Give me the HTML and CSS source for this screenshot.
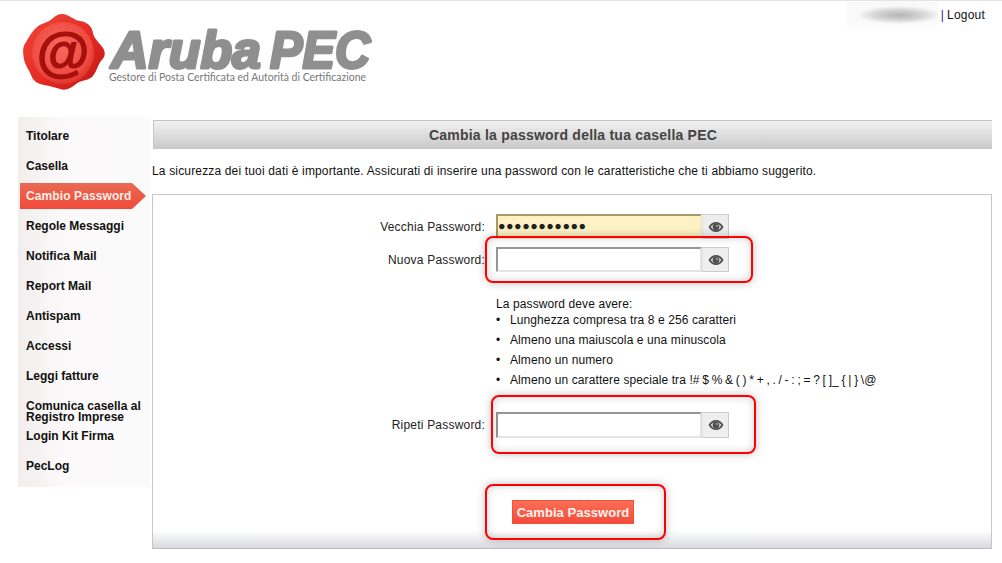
FILE: index.html
```html
<!DOCTYPE html>
<html lang="it">
<head>
<meta charset="utf-8">
<title>Aruba PEC</title>
<link rel="stylesheet" href="styles.css">
</head>
<body>
<svg width="0" height="0" class="defs">
  <defs>
    <symbol id="eye" viewBox="0 0 16 12">
      <path d="M.5 6C2.400 2.600 4.900 1 8 1S13.600 2.600 15.500 6C13.600 9.400 11.100 11 8 11S2.400 9.400.5 6Z" fill="#4f4f4f"/>
      <path d="M2.600 6C4 4 5.800 2.700 8 2.700S12 4 13.400 6C12 8 10.200 9.300 8 9.300S4 8 2.600 6Z" fill="#ddd"/>
      <circle cx="8" cy="6" r="3.300" fill="#4f4f4f"/>
      <circle cx="9" cy="5" r=".9" fill="#bbb"/>
    </symbol>
    <linearGradient id="seal" x1="0" y1="0" x2="1" y2="1">
      <stop offset="0" stop-color="#f0463a"/>
      <stop offset=".55" stop-color="#e52a22"/>
      <stop offset="1" stop-color="#bd1613"/>
    </linearGradient>
    <radialGradient id="sealin" cx=".45" cy=".4" r=".65">
      <stop offset="0" stop-color="#f76a60"/>
      <stop offset=".75" stop-color="#ee4a40"/>
      <stop offset="1" stop-color="#d92c25"/>
    </radialGradient>
  </defs>
</svg>
<header class="top">
  <svg class="logo" width="400" height="100" viewBox="0 0 400 100">
    <path d="M62 13C69 13 73 19 80 20C87 21 92 25 93 32C94 38 99 41 103 47C106 52 105 56 101 60C97 65 97 71 92 76C87 80 81 79 76 83C71 87 66 90 60 88C54 86 50 85 44 84C38 83 33 80 31 74C29 68 25 65 24 58C23 52 22 46 26 41C29 36 31 32 36 27C41 22 47 22 52 18C55 15 58 13 62 13Z" fill="url(#seal)"/>
    <circle cx="63" cy="52" r="31" fill="url(#sealin)"/>
    <text x="63" y="69" class="at">@</text>
    <text x="111" y="67" class="brand" textLength="150" lengthAdjust="spacingAndGlyphs">Aruba</text>
    <text x="270" y="67" class="brand" textLength="100" lengthAdjust="spacingAndGlyphs">PEC</text>
    <text x="109" y="80" class="tagline" textLength="257" lengthAdjust="spacingAndGlyphs">Gestore di Posta Certificata ed Autorità di Certificazione</text>
  </svg>
  <div class="user">
    <span class="user-blur"></span>
    <span class="sep">|</span> <a class="logout" href="#">Logout</a>
  </div>
</header>
<div class="page">
  <nav class="side">
    <a class="item" href="#">Titolare</a>
    <a class="item" href="#">Casella</a>
    <a class="item active" href="#">Cambio Password</a>
    <a class="item" href="#">Regole Messaggi</a>
    <a class="item" href="#">Notifica Mail</a>
    <a class="item" href="#">Report Mail</a>
    <a class="item" href="#">Antispam</a>
    <a class="item" href="#">Accessi</a>
    <a class="item" href="#">Leggi fatture</a>
    <a class="item tight" href="#">Comunica casella al Registro Imprese</a>
    <a class="item" href="#">Login Kit Firma</a>
    <a class="item" href="#">PecLog</a>
  </nav>
  <main class="main">
    <h1 class="title">Cambia la password della tua casella PEC</h1>
    <p class="intro">La sicurezza dei tuoi dati è importante. Assicurati di inserire una password con le caratteristiche che ti abbiamo suggerito.</p>
    <form class="panel">
      <div class="row row-old">
        <label class="lbl">Vecchia Password:</label>
        <div class="field filled">●●●●●●●●●●●</div>
        <span class="eye"><svg width="16" height="12"><use href="#eye"/></svg></span>
      </div>
      <div class="row row-new">
        <label class="lbl">Nuova Password:</label>
        <div class="field"></div>
        <span class="eye"><svg width="16" height="12"><use href="#eye"/></svg></span>
      </div>
      <div class="rules">
        <p class="rules-head">La password deve avere:</p>
        <ul class="rules-list">
          <li>Lunghezza compresa tra 8 e 256 caratteri</li>
          <li>Almeno una maiuscola e una minuscola</li>
          <li>Almeno un numero</li>
          <li>Almeno un carattere speciale tra <span class="specials">!# $ % &amp; ( ) * + , . / - : ; = ? [ ]_ { | } \@</span></li>
        </ul>
      </div>
      <div class="row row-rep">
        <label class="lbl">Ripeti Password:</label>
        <div class="field"></div>
        <span class="eye"><svg width="16" height="12"><use href="#eye"/></svg></span>
      </div>
      <div class="actions"><button class="submit" type="button">Cambia Password</button></div>
      <span class="mark mark-new"></span>
      <span class="mark mark-rep"></span>
      <span class="mark mark-btn"></span>
    </form>
  </main>
</div>
</body>
</html>
```

FILE: styles.css
```css
* { box-sizing: border-box; }
html, body { margin: 0; padding: 0; }
body {
  width: 1002px;
  height: 563px;
  overflow: hidden;
  background: #fff;
  border-top: 1px solid #e4e4e4;
  font-family: "Liberation Sans", Arial, sans-serif;
  font-size: 12px;
  color: #111;
}
.defs { position: absolute; }
.top {
  height: 116px;
  display: flex;
  justify-content: space-between;
  align-items: flex-start;
  padding-right: 17px;
}
.logo { display: block; }
.brand {
  font: italic 700 52px "Liberation Sans", Arial, sans-serif;
  fill: #8f8f8f;
  stroke: #8f8f8f;
  stroke-width: 3px;
  stroke-linejoin: round;
}
.tagline { font: 11px Lato, "Liberation Sans", sans-serif; fill: #777; }
.at {
  font: 700 54px "Liberation Sans", Arial, sans-serif;
  fill: #a50f0c;
  stroke: #a50f0c;
  stroke-width: 1.200px;
  text-anchor: middle;
}
.user {
  display: flex;
  align-items: center;
  gap: 3px;
  height: 28px;
  font-size: 12px;
  letter-spacing: .2px;
}
.user-blur {
  width: 91px;
  height: 30px;
  align-self: flex-start;
  background:
    radial-gradient(ellipse 42px 9px at 52px 14px, #b4b4b4 0%, #d4d4d4 55%, rgba(248, 248, 248, 0) 100%),
    linear-gradient(to bottom, #f9f9f9 60%, #fff);
}
.sep { color: #4b1a5c; }
.logout { color: #111; text-decoration: none; }
.page {
  display: flex;
  align-items: flex-start;
  padding-left: 18px;
}
.side {
  width: 132px;
  height: 370px;
  flex: none;
  display: flex;
  flex-direction: column;
  padding-top: 4px;
  background: linear-gradient(to right, #f1eeed, #fbf9f9 35%, #fbfafa);
}
.item {
  height: 30px;
  display: flex;
  align-items: center;
  padding-left: 8px;
  font-weight: 700;
  color: #111;
  text-decoration: none;
  flex: none;
}
.item.active {
  width: 126px;
  height: 26px;
  margin: 2px 0 2px 2px;
  padding-left: 6px;
  color: #fdeeea;
  background: linear-gradient(to bottom, #ea6a54, #f04a38);
  clip-path: polygon(0 0, 112px 0, 100% 50%, 112px 100%, 0 100%);
  letter-spacing: .1px;
}
.item.tight {
  display: block;
  line-height: 11px;
  padding-top: 10px;
}
.main {
  margin-left: 2px;
  width: 840px;
  flex: none;
}
.title {
  margin: 3px 0 0 1px;
  height: 29px;
  line-height: 29px;
  font-size: 14px;
  font-weight: 700;
  text-align: center;
  color: #444;
  letter-spacing: .22px;
  background: linear-gradient(to bottom, #f1f1f1, #c9c9c9);
  border-top: 1px solid #c4c4c4;
  border-left: 1px solid #c4c4c4;
}
.intro {
  margin: 15px 0 0;
  height: 14px;
  line-height: 14px;
  letter-spacing: .16px;
  white-space: nowrap;
}
.panel {
  position: relative;
  margin-top: 16px;
  height: 355px;
  border: 1px solid #c6c6c6;
  border-bottom-color: #bbb;
  background: linear-gradient(to bottom, #fff 0, #fff 95%, #d9dade 100%);
}
.row {
  display: flex;
  align-items: center;
  height: 25px;
}
.row-old { margin-top: 19px; }
.row-new { margin-top: 8px; }
.row-rep { margin-top: 22px; height: 26px; }
.lbl {
  width: 332px;
  text-align: right;
  color: #222;
  letter-spacing: .2px;
}
.field {
  margin-left: 11px;
  width: 206px;
  height: 100%;
  background: #fff;
  border-style: solid;
  border-color: #969696 #e3e3e3 #e3e3e3 #969696;
  border-width: 2px;
}
.field.filled {
  background: #fdf2c4;
  border-color: #a89868 #f5ecc4 #f5ecc4 #a89868;
  color: #222;
  font-size: 12.500px;
  line-height: 21px;
  letter-spacing: .5px;
  padding-left: 0;
  overflow: hidden;
  white-space: nowrap;
}
.eye {
  width: 27px;
  height: 100%;
  display: flex;
  align-items: center;
  justify-content: center;
  background: #eee;
  border: 1px solid #ccc;
  border-left-color: #e4e4e4;
}
.rules { margin: 24px 0 0 343px; letter-spacing: .1px; }
.rules-head { margin: 0; height: 14px; line-height: 16px; }
.rules-list { list-style: none; margin: 0; padding: 0; }
.rules-list li {
  height: 20px;
  line-height: 20px;
  padding-left: 14px;
  position: relative;
  white-space: nowrap;
}
.rules-list li::before {
  content: "•";
  position: absolute;
  left: 0;
}
.specials { word-spacing: -.8px; }
.actions { margin: 62px 0 0 359px; }
.submit {
  display: block;
  width: 122px;
  height: 24px;
  padding: 0;
  border: 1px solid #f0503c;
  background: linear-gradient(to bottom, #fb6f55, #f44a3c);
  color: #fff3ee;
  font: 700 13px "Liberation Sans", Arial, sans-serif;
  letter-spacing: .05px;
}
.mark {
  position: absolute;
  border: 2px solid #f00;
  border-radius: 8px;
  box-shadow: 0 0 8px rgba(0, 0, 0, .25), inset 0 0 8px rgba(0, 0, 0, .18);
  pointer-events: none;
}
.mark-new { left: 332px; top: 41px; width: 268px; height: 47px; }
.mark-rep { left: 338px; top: 200px; width: 265px; height: 59px; }
.mark-btn { left: 332px; top: 289px; width: 181px; height: 56px; }
```
